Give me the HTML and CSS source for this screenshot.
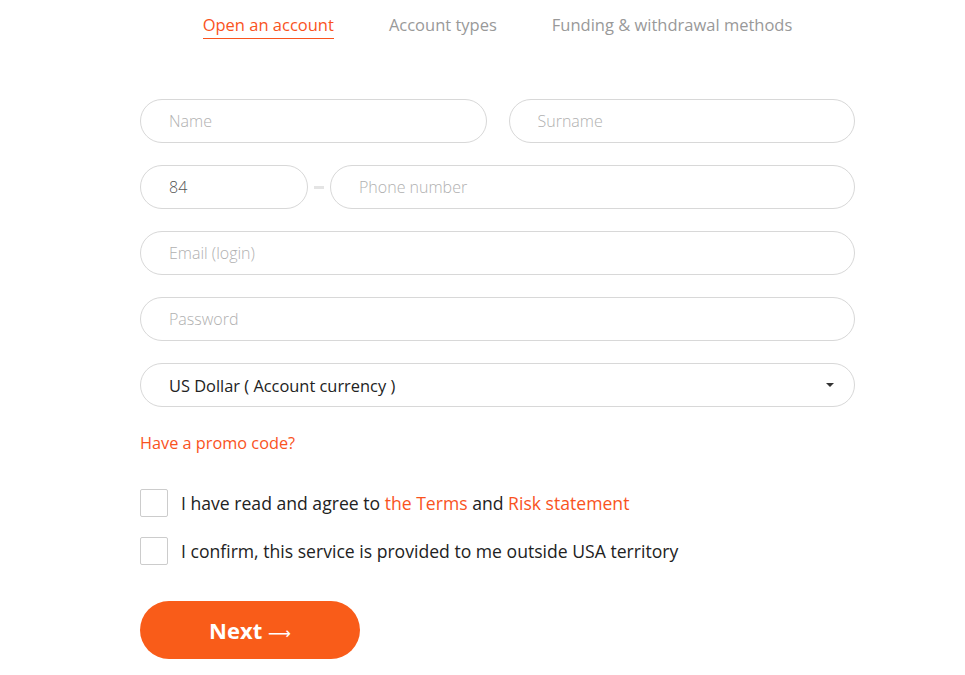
FILE: index.html
```html
<!DOCTYPE html>
<html lang="en">
<head>
  <meta charset="UTF-8" />
  <title>Open an account</title>
  <link rel="stylesheet" href="styles.css">
</head>
<body>
  <div class="page">
    <nav class="tabs">
      <a class="tab active" href="#">Open an account</a>
      <a class="tab" href="#">Account types</a>
      <a class="tab" href="#">Funding &amp; withdrawal methods</a>
    </nav>

    <form class="form">
      <div class="row">
        <input class="field" type="text" placeholder="Name">
        <input class="field" type="text" placeholder="Surname">
      </div>

      <div class="row phone">
        <input class="field code" type="text" value="84">
        <span class="dash"></span>
        <input class="field" type="text" placeholder="Phone number">
      </div>

      <input class="field" type="email" placeholder="Email (login)">
      <input class="field" type="password" placeholder="Password">

      <div class="select">
        <span>US Dollar ( Account currency )</span>
        <span class="caret"></span>
      </div>

      <a class="promo" href="#">Have a promo code?</a>

      <label class="check">
        <span class="box"></span>
        <span>I have read and agree to <a href="#">the Terms</a> and <a href="#">Risk statement</a></span>
      </label>
      <label class="check">
        <span class="box"></span>
        <span>I confirm, this service is provided to me outside USA territory</span>
      </label>

      <button type="button" class="next">Next <span class="arrow">&#10230;</span></button>
    </form>
  </div>
</body>
</html>
```

FILE: styles.css
```css
body {
  margin: 0;
  font-family: 'Open Sans', 'Liberation Sans', sans-serif;
  background: #fff;
  color: #222;
}

.page {
  width: 715px;
  margin-left: 140px;
}

/* Top tabs */
.tabs {
  display: flex;
  justify-content: center;
  gap: 55px;
  padding-top: 12px;
  height: 99px;
  box-sizing: border-box;
}

.tab {
  font-size: 16.5px;
  color: #999;
  text-decoration: none;
  height: 26px;
  line-height: 26px;
}

.tab.active {
  color: #f9531e;
  border-bottom: 1px solid #f9531e;
}

/* Form */
.form {
  display: flex;
  flex-direction: column;
  gap: 22px;
}

.row {
  display: flex;
  gap: 22px;
}

.row .field {
  flex: 1;
  min-width: 0;
}

.row.phone {
  gap: 6px;
  align-items: center;
}

.row.phone .code {
  flex: 0 0 168px;
}

.dash {
  width: 10px;
  height: 3px;
  background: #e4e4e4;
}

.field {
  height: 44px;
  box-sizing: border-box;
  border: 1px solid #d8d8d8;
  border-radius: 22px;
  padding: 0 28px;
  font-family: 'Open Sans', sans-serif;
  font-weight: 300;
  font-size: 16px;
  color: #555;
  outline: none;
  width: 100%;
}

.field::placeholder {
  color: #b0b0b0;
}

.select {
  height: 44px;
  box-sizing: border-box;
  border: 1px solid #d8d8d8;
  border-radius: 22px;
  padding: 0 20px 0 28px;
  display: flex;
  align-items: center;
  justify-content: space-between;
  font-size: 16.4px;
  color: #222;
}

.caret {
  width: 0;
  height: 0;
  border-left: 4px solid transparent;
  border-right: 4px solid transparent;
  border-top: 4px solid #333;
}

.promo {
  color: #f9531e;
  font-size: 16.3px;
  text-decoration: none;
  line-height: 28px;
}

.check {
  display: flex;
  align-items: center;
  gap: 13px;
  font-size: 17.6px;
  color: #222;
  margin-top: 10px;
}

.form .check + .check {
  margin-top: -2px;
}

.check a {
  color: #f9531e;
  text-decoration: none;
}

.box {
  width: 28px;
  height: 28px;
  box-sizing: border-box;
  border: 1px solid #ccc;
  border-radius: 2px;
  flex-shrink: 0;
}

.next {
  margin-top: 14px;
  width: 220px;
  height: 58px;
  border: none;
  border-radius: 29px;
  background: #f95c19;
  color: #fff;
  font-family: 'Open Sans', sans-serif;
  font-weight: 700;
  font-size: 22px;
  cursor: pointer;
}

.arrow {
  font-family: 'DejaVu Sans', sans-serif;
  font-weight: 400;
  font-size: 16px;
}
```
